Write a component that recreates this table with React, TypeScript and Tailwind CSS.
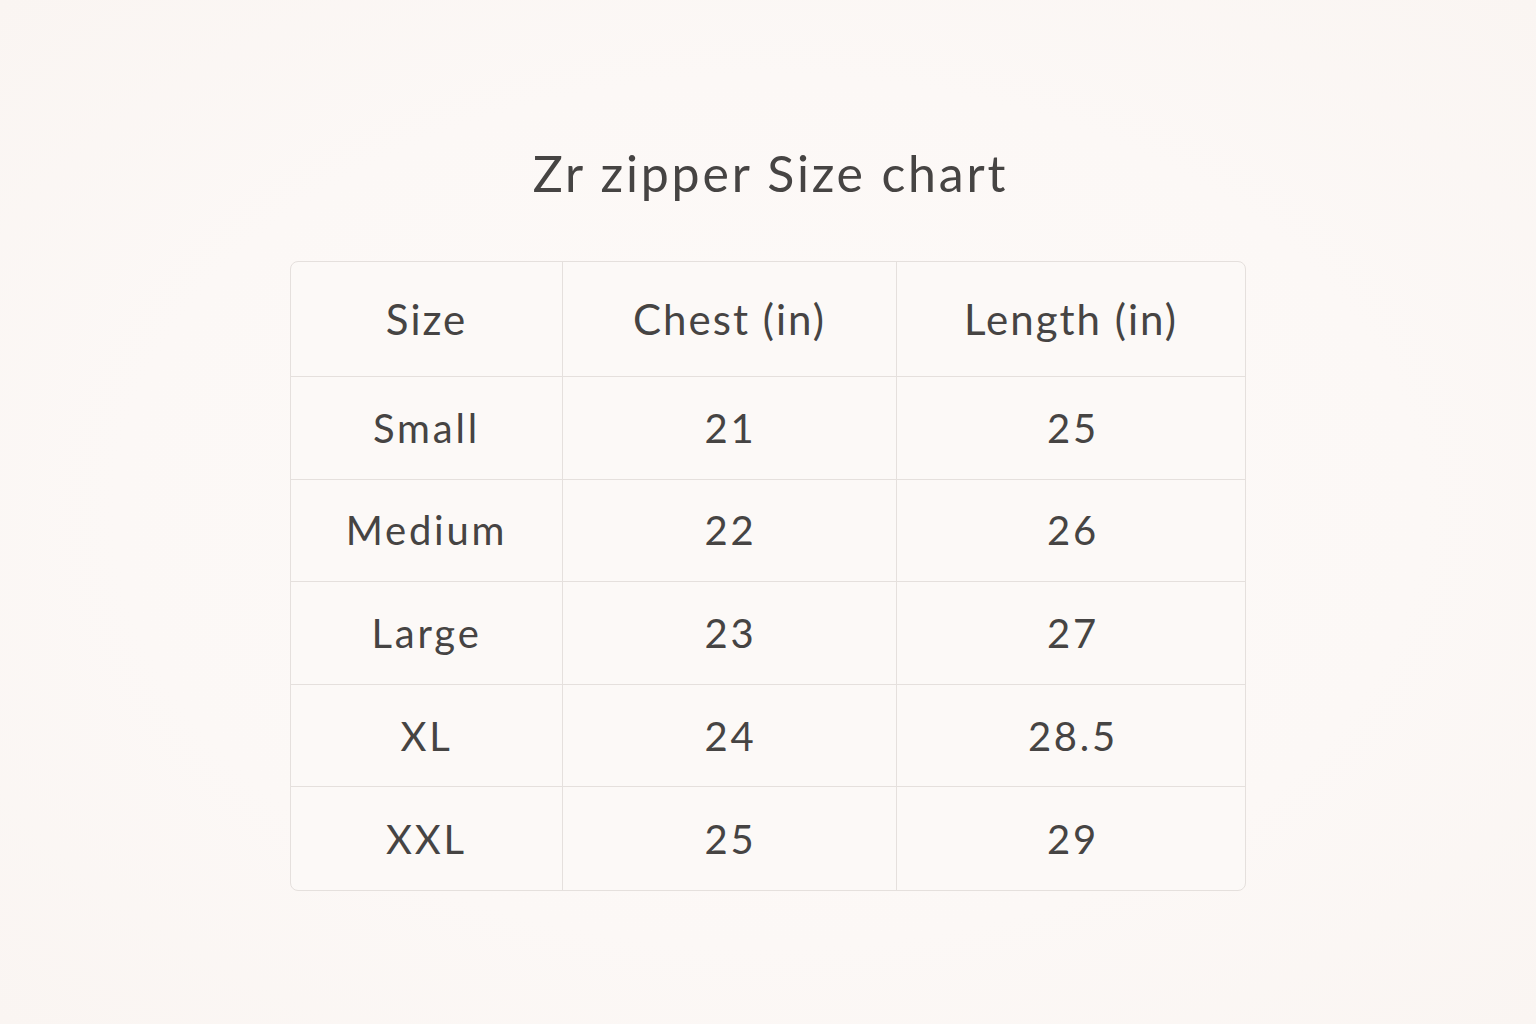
import React from "react";

const rows = [
  ["Small", "21", "25"],
  ["Medium", "22", "26"],
  ["Large", "23", "27"],
  ["XL", "24", "28.5"],
  ["XXL", "25", "29"],
];

export default function App() {
  return (
    <div
      className="w-[1536px] h-[1024px] flex flex-col items-center bg-[radial-gradient(ellipse_at_center,#fdfaf8_0%,#fcf8f6_60%,#faf5f2_100%)] text-[#464443]"
      style={{ fontFamily: "Lato, 'Open Sans', sans-serif" }}
    >
      <h1 className="mt-[138px] h-[70px] pl-[5px] text-[50px] leading-[70px] tracking-[2.8px] font-normal">
        Zr zipper Size chart
      </h1>
      <div className="mt-[53px] w-[956px] rounded-[8px] border border-[#e5e0dd] bg-[#fcf9f7] overflow-hidden">
        <div className="grid grid-cols-[272px_334px_1fr] h-[115px] border-b border-[#e5e0dd] text-[42px] tracking-[2px]">
          <div className="flex items-center justify-center border-r border-[#e5e0dd]">Size</div>
          <div className="flex items-center justify-center border-r border-[#e5e0dd]">Chest (in)</div>
          <div className="flex items-center justify-center">Length (in)</div>
        </div>
        {rows.map((r, i) => (
          <div
            key={i}
            className={`grid grid-cols-[272px_334px_1fr] h-[102.6px] text-[40px] tracking-[2.8px] ${i < rows.length - 1 ? "border-b border-[#e5e0dd]" : ""}`}
          >
            <div className="flex items-center justify-center border-r border-[#e5e0dd]">{r[0]}</div>
            <div className="flex items-center justify-center border-r border-[#e5e0dd] pl-[2px]">{r[1]}</div>
            <div className="flex items-center justify-center pl-[4px]">{r[2]}</div>
          </div>
        ))}
      </div>
    </div>
  );
}
